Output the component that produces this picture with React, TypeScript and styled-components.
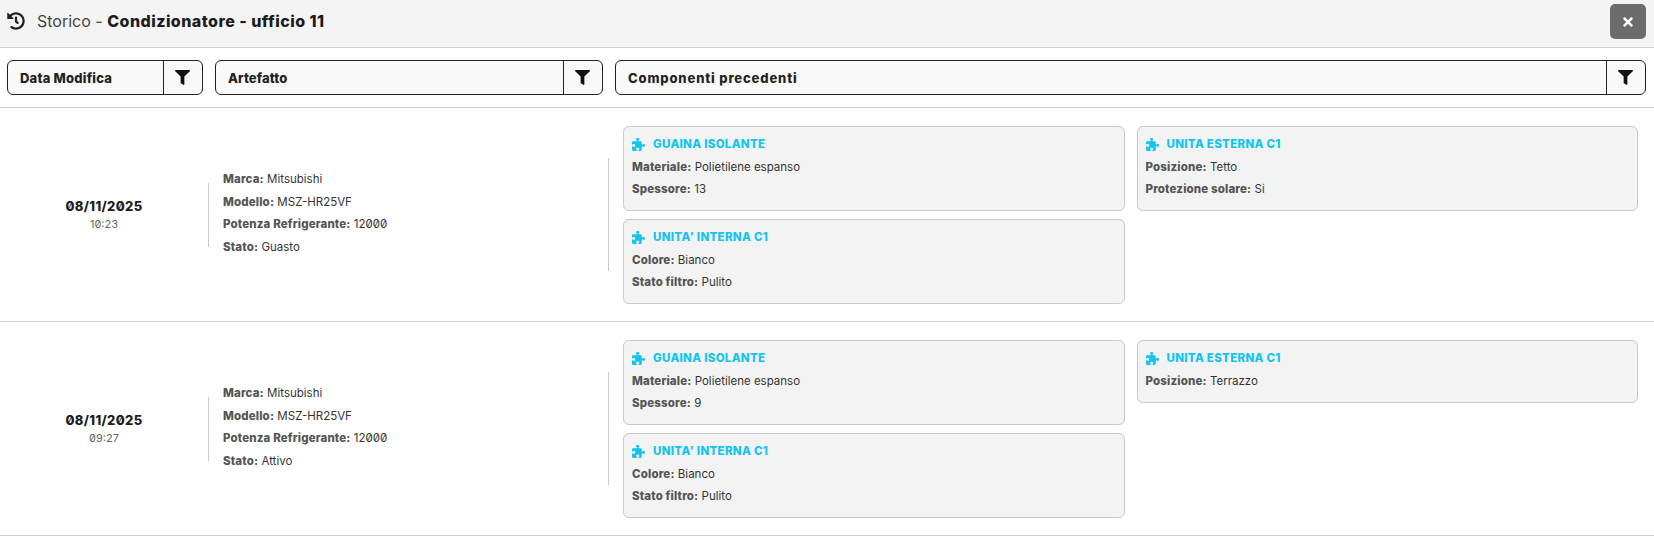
import React from "react";
import styled, { createGlobalStyle } from "styled-components";
import { FaFilter, FaHistory, FaTimes } from "react-icons/fa";
import { FaPuzzlePiece } from "react-icons/fa6";

const GlobalStyle = createGlobalStyle`
  html, body { margin: 0; padding: 0; background: #fff; }
  body {
    font-family: Inter, "Liberation Sans", sans-serif;
    font-variant-numeric: slashed-zero;
    color: #212529;
  }
`;

const Header = styled.header`
  height: 47px;
  display: flex;
  align-items: center;
  justify-content: space-between;
  padding: 0 8px 0 7px;
  background: #f4f4f4;
  border-bottom: 1px solid #cfcfcf;
`;

const HeaderTitle = styled.div`
  display: flex;
  align-items: center;
  gap: 12px;
  font-size: 16px;
  color: #444;
  margin-top: -5px;
  svg { color: #222; }
  b { color: #1c1c1c; font-weight: 800; letter-spacing: 0.45px; }
`;

const CloseButton = styled.button`
  width: 36px;
  height: 35px;
  margin-top: -4px;
  display: flex;
  align-items: center;
  justify-content: center;
  padding: 0;
  border: 0;
  border-radius: 5px;
  background: #6c6c6c;
  color: #fff;
`;

const FilterBar = styled.div`
  height: 59px;
  display: flex;
  align-items: center;
  gap: 12px;
  padding: 0 8px 0 7px;
  background: #fff;
  border-bottom: 1px solid #cfcfcf;
`;

const FilterField = styled.div<{ $width?: number }>`
  ${({ $width }) => ($width ? `width: ${$width}px;` : "flex: 1;")}
  height: 35px;
  box-sizing: border-box;
  display: flex;
  border: 1px solid #222;
  border-radius: 6px;
  background: #f9f9f9;
`;

const FilterLabel = styled.div<{ $spacing: number }>`
  flex: 1;
  display: flex;
  align-items: center;
  padding-left: 12px;
  font-size: 13px;
  font-weight: 800;
  letter-spacing: ${({ $spacing }) => $spacing}px;
  color: #222;
`;

const FilterButton = styled.div`
  width: 37px;
  padding-right: 1px;
  display: flex;
  align-items: center;
  justify-content: center;
  border-left: 1px solid #222;
  color: #111;
`;

const Row = styled.div`
  height: 214px;
  box-sizing: border-box;
  display: flex;
  align-items: center;
  border-bottom: 1px solid #cfcfcf;
`;

const DateCol = styled.div`
  width: 208px;
  flex: none;
  text-align: center;
  line-height: 1;
`;

const DateText = styled.div`
  font-size: 13px;
  font-weight: 800;
  color: #1c1c1c;
  letter-spacing: 0.35px;
  margin-bottom: 6px;
`;

const TimeText = styled.div`
  font-size: 11px;
  color: #666;
`;

const DetailsCol = styled.div`
  width: 400px;
  flex: none;
  box-sizing: border-box;
  padding-left: 14px;
  border-left: 1px solid #c8c8c8;
  height: 64px;
  display: flex;
  flex-direction: column;
  justify-content: center;
`;

const Line = styled.div`
  font-size: 11.5px;
  line-height: 14px;
  color: #333;
  white-space: nowrap;
  b { color: #555; font-weight: 800; letter-spacing: 0.15px; }
`;

const DetailLines = styled.div`
  display: flex;
  flex-direction: column;
  gap: 8.4px;
  margin-top: -3px;
`;

const ComponentsCol = styled.div`
  flex: 1;
  box-sizing: border-box;
  padding-left: 14px;
  padding-right: 16px;
  border-left: 1px solid #c8c8c8;
  height: 113px;
  display: flex;
  align-items: center;
`;

const CardGrid = styled.div`
  flex: 1;
  display: grid;
  grid-template-columns: 1fr 1fr;
  gap: 8px 12px;
  align-items: start;
  height: 178px;
`;

const CardColumn = styled.div`
  display: flex;
  flex-direction: column;
  gap: 8px;
`;

const Card = styled.div<{ $height: number }>`
  height: ${({ $height }) => $height}px;
  box-sizing: border-box;
  padding: 10px 8px;
  background: #f3f3f3;
  border: 1px solid #c9c9c9;
  border-radius: 6px;
  display: flex;
  flex-direction: column;
  gap: 8px;
`;

const CardTitle = styled.div`
  display: flex;
  align-items: center;
  gap: 8px;
  font-size: 11.5px;
  line-height: 15px;
  font-weight: 800;
  letter-spacing: 0.3px;
  color: #12c4ee;
`;

type Part = { title: string; height?: number; fields: [string, string][] };
type Entry = { date: string; time: string; details: [string, string][]; left: Part[]; right: Part[] };

const entries: Entry[] = [
  {
    date: "08/11/2025",
    time: "10:23",
    details: [
      ["Marca", "Mitsubishi"],
      ["Modello", "MSZ-HR25VF"],
      ["Potenza Refrigerante", "12000"],
      ["Stato", "Guasto"],
    ],
    left: [
      { title: "GUAINA ISOLANTE", fields: [["Materiale", "Polietilene espanso"], ["Spessore", "13"]] },
      { title: "UNITA' INTERNA C1", fields: [["Colore", "Bianco"], ["Stato filtro", "Pulito"]] },
    ],
    right: [{ title: "UNITA ESTERNA C1", fields: [["Posizione", "Tetto"], ["Protezione solare", "Si"]] }],
  },
  {
    date: "08/11/2025",
    time: "09:27",
    details: [
      ["Marca", "Mitsubishi"],
      ["Modello", "MSZ-HR25VF"],
      ["Potenza Refrigerante", "12000"],
      ["Stato", "Attivo"],
    ],
    left: [
      { title: "GUAINA ISOLANTE", fields: [["Materiale", "Polietilene espanso"], ["Spessore", "9"]] },
      { title: "UNITA' INTERNA C1", fields: [["Colore", "Bianco"], ["Stato filtro", "Pulito"]] },
    ],
    right: [{ title: "UNITA ESTERNA C1", height: 63, fields: [["Posizione", "Terrazzo"]] }],
  },
];

const filters = [
  { label: "Data Modifica", width: 196, spacing: 0.2 },
  { label: "Artefatto", width: 388, spacing: 0.1 },
  { label: "Componenti precedenti", spacing: 0.85 },
];

const PartCard = ({ part }: { part: Part }) => (
  <Card $height={part.height ?? 85}>
    <CardTitle>
      <FaPuzzlePiece size={13} />
      {part.title}
    </CardTitle>
    {part.fields.map(([k, v]) => (
      <Line key={k}>
        <b>{k}:</b> {v}
      </Line>
    ))}
  </Card>
);

const App = () => (
  <>
    <GlobalStyle />
    <Header>
      <HeaderTitle>
        <FaHistory size={18} />
        <span>
          Storico - <b>Condizionatore - ufficio 11</b>
        </span>
      </HeaderTitle>
      <CloseButton>
        <FaTimes size={14} />
      </CloseButton>
    </Header>
    <FilterBar>
      {filters.map(f => (
        <FilterField key={f.label} $width={f.width}>
          <FilterLabel $spacing={f.spacing}>{f.label}</FilterLabel>
          <FilterButton>
            <FaFilter size={15} />
          </FilterButton>
        </FilterField>
      ))}
    </FilterBar>
    {entries.map(e => (
      <Row key={e.time}>
        <DateCol>
          <DateText>{e.date}</DateText>
          <TimeText>{e.time}</TimeText>
        </DateCol>
        <DetailsCol>
          <DetailLines>
            {e.details.map(([k, v]) => (
              <Line key={k}>
                <b>{k}:</b> {v}
              </Line>
            ))}
          </DetailLines>
        </DetailsCol>
        <ComponentsCol>
          <CardGrid>
            <CardColumn>
              {e.left.map(p => (
                <PartCard key={p.title} part={p} />
              ))}
            </CardColumn>
            <CardColumn>
              {e.right.map(p => (
                <PartCard key={p.title} part={p} />
              ))}
            </CardColumn>
          </CardGrid>
        </ComponentsCol>
      </Row>
    ))}
  </>
);

export default App;
